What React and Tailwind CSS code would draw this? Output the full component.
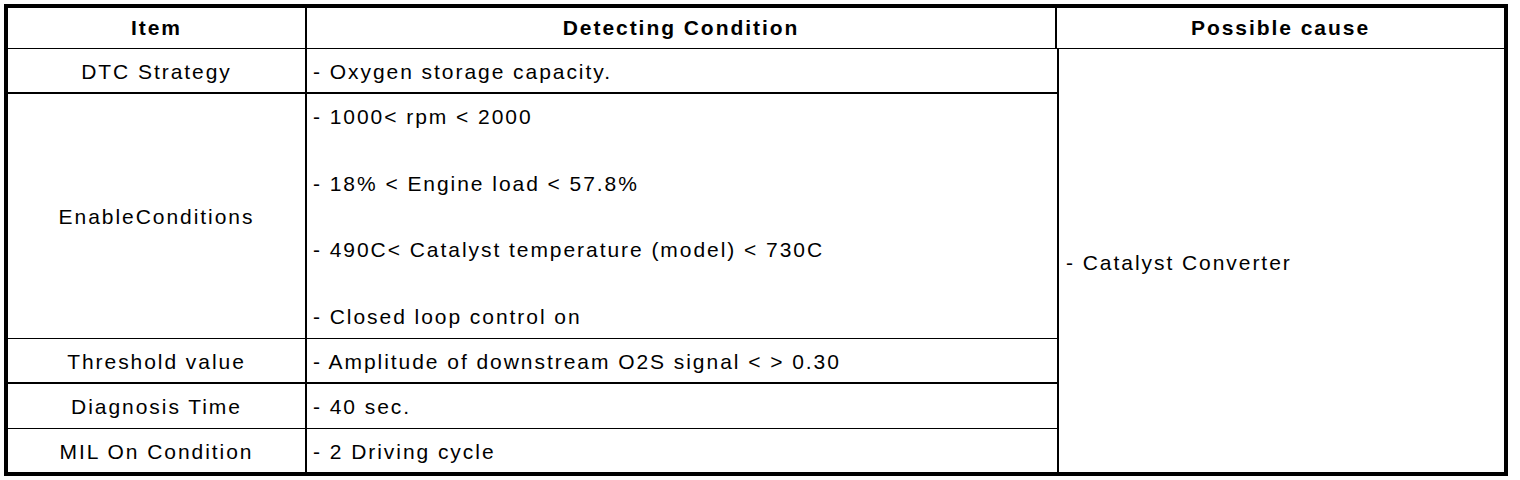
const rows = [
  { item: 'DTC Strategy', h: 'h-[43px]', border: 'border-b-2', lines: ['- Oxygen storage capacity.'] },
  {
    item: 'EnableConditions',
    h: 'h-[244px]',
    border: 'border-b',
    lines: [
      '- 1000< rpm < 2000',
      '- 18% < Engine load < 57.8%',
      '- 490C< Catalyst temperature (model) < 730C',
      '- Closed loop control on',
    ],
  },
  { item: 'Threshold value', h: 'h-[43px]', border: 'border-b-2', lines: ['- Amplitude of downstream O2S signal < > 0.30'] },
  { item: 'Diagnosis Time', h: 'h-[44px]', border: 'border-b', lines: ['- 40 sec.'] },
  { item: 'MIL On Condition', h: 'h-[43px]', border: '', lines: ['- 2 Driving cycle'] },
]

export default function App() {
  return (
    <div className="bg-white w-[1520px] h-[480px] pt-1 pl-1 text-black text-[21px] leading-6 tracking-[1.95px] font-['Liberation_Sans',Arial,sans-serif]">
      <div className="w-[1504px] border-4 border-black">
        {/* Header */}
        <div className="flex h-[41px] border-b border-black font-bold">
          <div className="w-[299px] border-r-2 border-black flex items-center justify-center">Item</div>
          <div className="w-[750px] border-r-2 border-black flex items-center justify-center">Detecting Condition</div>
          <div className="flex-1 flex items-center justify-center">Possible cause</div>
        </div>

        {/* Body */}
        <div className="flex">
          <div className="w-[1051px] border-r-2 border-black">
            {rows.map((r) => (
              <div key={r.item} className={`flex ${r.h} ${r.border} border-black box-content`}>
                <div className="w-[299px] border-r-2 border-black flex items-center justify-center pt-0.5">{r.item}</div>
                {r.lines.length > 1 ? (
                  <div className="flex-1 flex flex-col gap-[42.7px] pl-[6px] pt-[11px]">
                    {r.lines.map((l) => <span key={l}>{l}</span>)}
                  </div>
                ) : (
                  <div className="flex-1 flex items-center pl-[6px] pt-0.5">{r.lines[0]}</div>
                )}
              </div>
            ))}
          </div>
          <div className="flex-1 flex items-center pl-[7px] pt-1">- Catalyst Converter</div>
        </div>
      </div>
    </div>
  )
}
